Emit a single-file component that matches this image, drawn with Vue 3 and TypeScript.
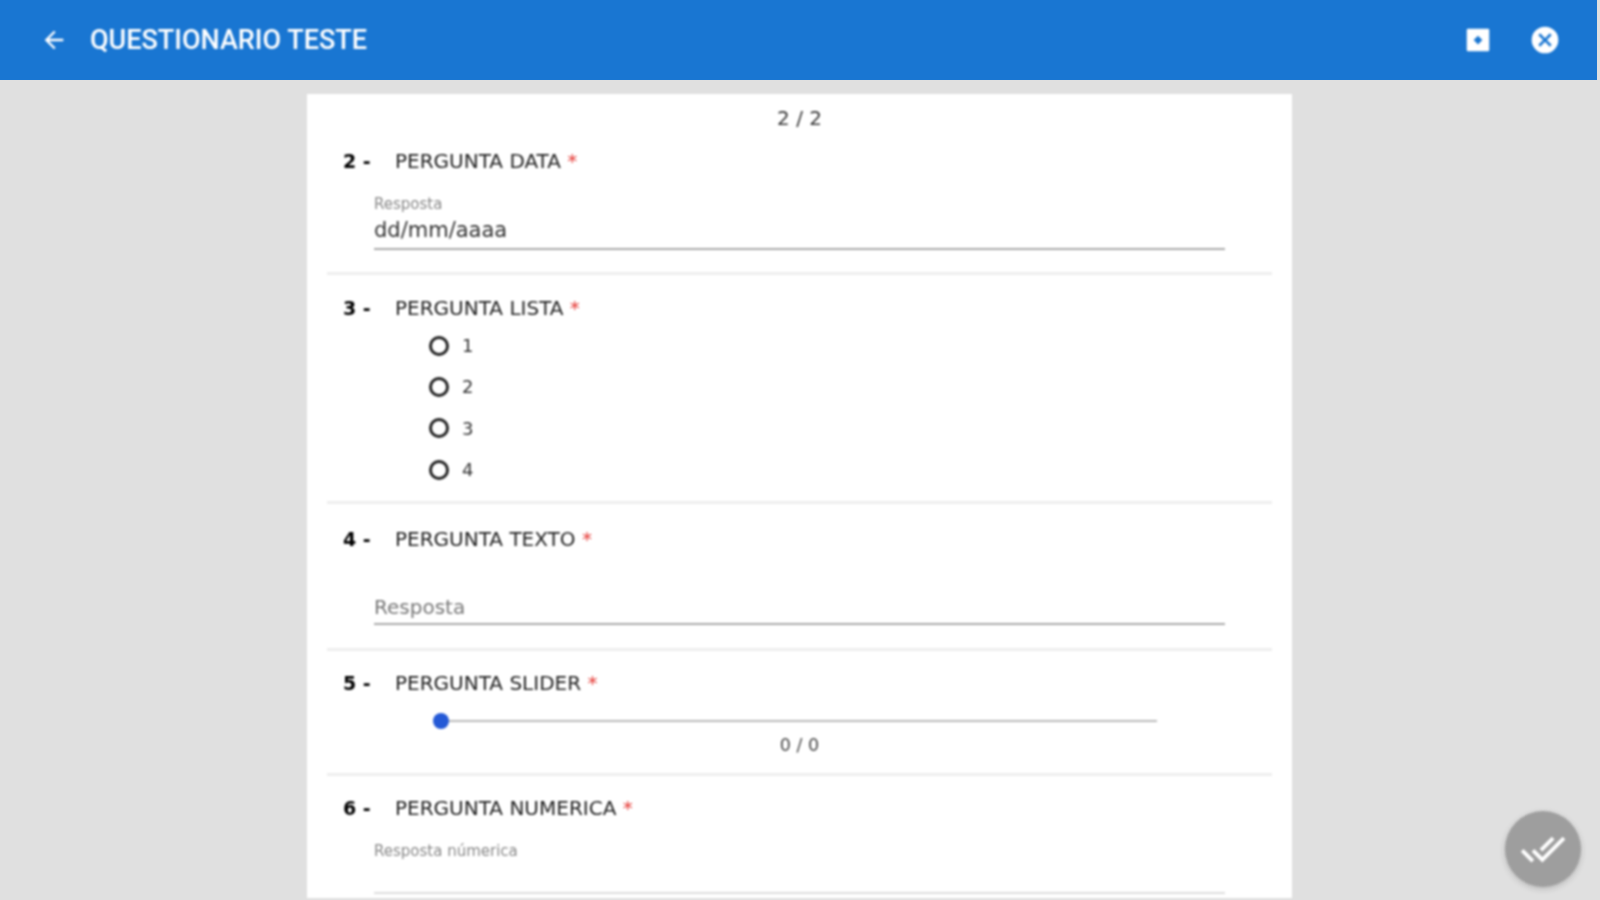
<script setup lang="ts">
const options: string[] = ['1', '2', '3', '4']
</script>

<template>
  <div class="page">
    <header class="bar">
      <div class="bar-left soft">
        <svg class="back" viewBox="0 0 24 24" width="28" height="28"><path fill="#fff" d="M20 11H7.83l5.59-5.59L12 4l-8 8 8 8 1.41-1.41L7.83 13H20z"/></svg>
        <span class="title">QUESTIONARIO TESTE</span>
      </div>
      <div class="bar-right soft">
        <svg viewBox="0 0 24 24" width="30" height="30"><path fill="#fff" fill-rule="evenodd" d="M4 3h16a1 1 0 0 1 1 1v16a1 1 0 0 1-1 1H4a1 1 0 0 1-1-1V4a1 1 0 0 1 1-1zm8 5.500L8.500 12l3.500 3.500 3.500-3.500z"/></svg>
        <svg viewBox="0 0 24 24" width="32" height="32"><path fill="#fff" fill-rule="evenodd" d="M12 2a10 10 0 1 0 0 20 10 10 0 0 0 0-20zm5 13.600L15.600 17 12 13.400 8.400 17 7 15.600 10.600 12 7 8.400 8.400 7 12 10.600 15.600 7 17 8.400 13.400 12z"/></svg>
      </div>
    </header>

    <main class="card soft">
      <div class="pager">2 / 2</div>

      <section class="q q2">
        <h3 class="qh"><b>2 -</b><span>PERGUNTA DATA <i>*</i></span></h3>
        <div class="field filled">
          <label>Resposta</label>
          <div class="value">dd/mm/aaaa</div>
        </div>
      </section>

      <section class="q q3">
        <h3 class="qh"><b>3 -</b><span>PERGUNTA LISTA <i>*</i></span></h3>
        <div class="radios">
          <div v-for="o in options" :key="o" class="radio"><span class="ring"></span>{{ o }}</div>
        </div>
      </section>

      <section class="q q4">
        <h3 class="qh"><b>4 -</b><span>PERGUNTA TEXTO <i>*</i></span></h3>
        <div class="field empty"><div class="value ph">Resposta</div></div>
      </section>

      <section class="q q5">
        <h3 class="qh"><b>5 -</b><span>PERGUNTA SLIDER <i>*</i></span></h3>
        <div class="slider"><span class="thumb"></span></div>
        <div class="count">0 / 0</div>
      </section>

      <section class="q q6">
        <h3 class="qh"><b>6 -</b><span>PERGUNTA NUMERICA <i>*</i></span></h3>
        <div class="field numeric"><label>Resposta númerica</label></div>
      </section>
    </main>

    <button class="fab soft" aria-label="Concluir">
      <svg viewBox="0 0 24 24" width="46" height="46"><path fill="#fff" d="M18 7l-1.410-1.410-6.340 6.340 1.410 1.410L18 7zm4.240-1.410L11.660 16.170 7.480 12l-1.410 1.410L11.660 19l12-12-1.420-1.410zM.41 13.410 6 19l1.410-1.410L1.830 12 .41 13.410z"/></svg>
    </button>
  </div>
</template>

<style>
html, body { margin: 0; background: #e0e0e0; }
</style>

<style scoped>
.page {
  position: relative;
  height: 900px;
  overflow: hidden;
  background: #e0e0e0;
  font-family: "DejaVu Sans", sans-serif;
  color: #333;
}
.soft { filter: blur(0.8px); }
.bar {
  width: 1597px;
  height: 80px;
  box-sizing: border-box;
  background: #1976d2;
  display: flex;
  align-items: center;
  justify-content: space-between;
  padding: 0 36px 0 40px;
}
.bar-left { display: flex; align-items: center; gap: 22px; }
.bar-right { display: flex; align-items: center; gap: 36px; }
.back { display: block; }
.title {
  font-family: Roboto, sans-serif;
  font-weight: 500;
  font-size: 27px;
  color: #fff;
}
.card {
  width: 985px;
  height: 804px;
  margin: 14px 0 0 307px;
  box-sizing: border-box;
  padding: 0 20px;
  background: #fff;
}
.pager { height: 48px; line-height: 48px; padding-bottom: 7px; text-align: center; font-size: 20px; color: #333; }
.q { border-bottom: 3px solid #eee; box-sizing: border-box; }
.qh {
  display: flex;
  margin: 0;
  padding-left: 16px;
  font-size: 20px;
  font-weight: 400;
  line-height: 24px;
  color: #222;
}
.qh b { width: 52px; font-size: 19px; color: #000; font-weight: 700; }
.qh i { color: #e53935; font-style: normal; }
.field { margin: 0 47px 0 47px; border-bottom: 2px solid #aaa; box-sizing: border-box; }
.field label { display: block; font-size: 15px; color: #888; line-height: 16px; }
.value { font-size: 21px; line-height: 26px; color: #333; }
.ph { font-size: 20px; color: #777; }

.q2 { height: 126px; }
.q2 .qh { margin-bottom: 23px; }
.q2 .field { height: 54px; }
.q2 .value { margin-top: 5px; }

.q3 { height: 229px; padding-top: 21px; }
.radios { padding: 5px 0 0 102px; }
.radio {
  height: 41.330px;
  display: flex;
  align-items: center;
  gap: 13px;
  font-size: 18px;
  color: #333;
}
.ring {
  width: 20px;
  height: 20px;
  box-sizing: border-box;
  border: 3px solid #222;
  border-radius: 50%;
}

.q4 { height: 147px; padding-top: 23px; }
.q4 .qh { margin-bottom: 43px; }
.q4 .field { height: 31px; }

.q5 { height: 125px; padding-top: 20px; }
.slider { position: relative; height: 2px; margin: 25px 0 0 114px; width: 716px; background: #bbb; }
.thumb {
  position: absolute;
  left: -8px;
  top: -7px;
  width: 16px;
  height: 16px;
  border-radius: 50%;
  background: #2459d6;
}
.count { margin-top: 13px; text-align: center; font-size: 17.500px; line-height: 20px; color: #444; }

.q6 { border: 0; padding-top: 20px; }
.q6 .qh { margin-bottom: 23px; }
.q6 .field { height: 51px; border-bottom-color: #ddd; }

.fab {
  position: absolute;
  left: 1505px;
  top: 811px;
  width: 76px;
  height: 76px;
  border: 0;
  padding: 0;
  border-radius: 50%;
  background: #9e9e9e;
  display: flex;
  align-items: center;
  justify-content: center;
  box-shadow: 0 2px 6px rgba(0, 0, 0, .18);
}
</style>
